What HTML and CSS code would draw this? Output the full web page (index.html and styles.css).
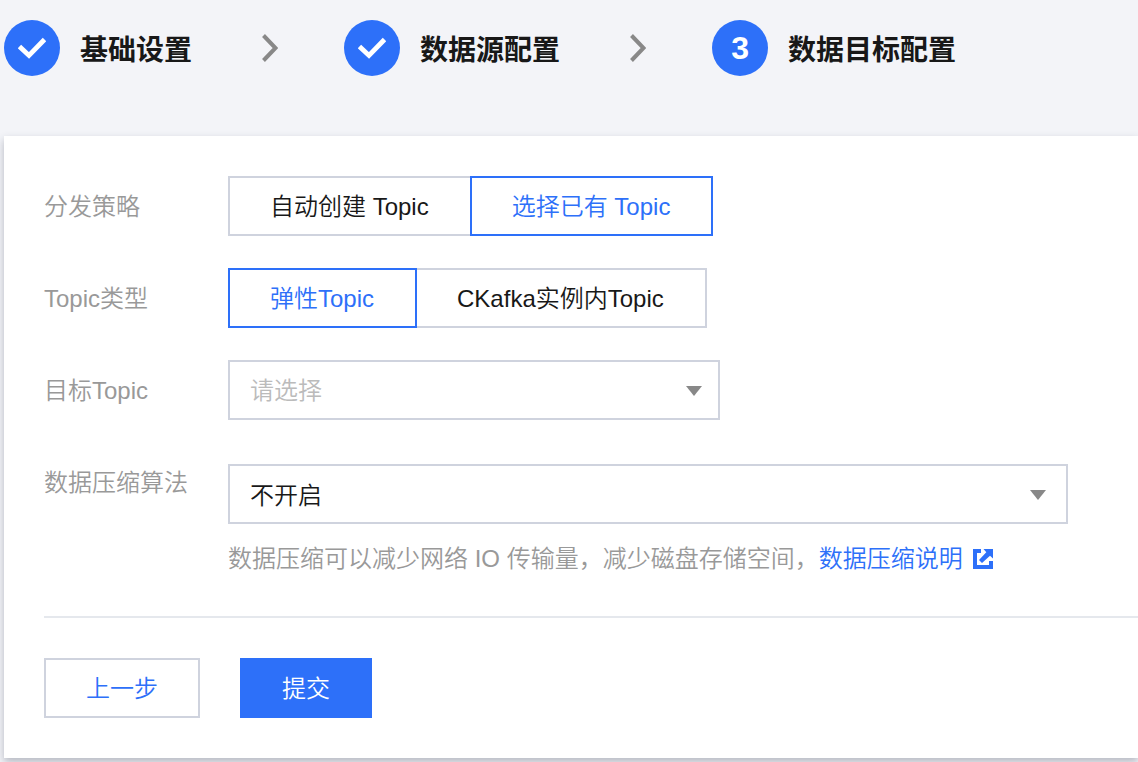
FILE: index.html
```html
<!DOCTYPE html>
<html lang="zh-CN">
<head>
<meta charset="utf-8">
<meta name="viewport" content="width=device-width, initial-scale=1">
<title>数据目标配置</title>
<link rel="stylesheet" href="styles.css">
</head>
<body>
<ol class="steps">
  <li class="step">
    <span class="step-badge"><svg width="28" height="28" viewBox="0 0 28 28" aria-hidden="true"><path d="M1.5 12.5 11 21.5 26.5 5.5" fill="none" stroke="#fff" stroke-width="4.8"/></svg></span>
    <span class="step-title">基础设置</span>
    <svg class="step-arrow" width="16" height="28" viewBox="0 0 16 28" aria-hidden="true"><path d="M1.5 1.5 13.5 14 1.5 26.5" fill="none" stroke="#888" stroke-width="4"/></svg>
  </li>
  <li class="step">
    <span class="step-badge"><svg width="28" height="28" viewBox="0 0 28 28" aria-hidden="true"><path d="M1.5 12.5 11 21.5 26.5 5.5" fill="none" stroke="#fff" stroke-width="4.8"/></svg></span>
    <span class="step-title">数据源配置</span>
    <svg class="step-arrow" width="16" height="28" viewBox="0 0 16 28" aria-hidden="true"><path d="M1.5 1.5 13.5 14 1.5 26.5" fill="none" stroke="#888" stroke-width="4"/></svg>
  </li>
  <li class="step" aria-current="step">
    <span class="step-badge">3</span>
    <span class="step-title">数据目标配置</span>
  </li>
</ol>
<form class="card">
  <div class="row">
    <span class="label" id="policy-label">分发策略</span>
    <div class="segment" role="group" aria-labelledby="policy-label">
      <button class="segment-item" type="button" aria-pressed="false">自动创建 Topic</button>
      <button class="segment-item active" type="button" aria-pressed="true">选择已有 Topic</button>
    </div>
  </div>
  <div class="row">
    <span class="label" id="type-label">Topic类型</span>
    <div class="segment" role="group" aria-labelledby="type-label">
      <button class="segment-item active" type="button" aria-pressed="true">弹性Topic</button>
      <button class="segment-item" type="button" aria-pressed="false">CKafka实例内Topic</button>
    </div>
  </div>
  <div class="row">
    <label class="label" for="target">目标Topic</label>
    <div class="control">
      <div class="select-box select-medium">
        <select class="select placeholder" id="target"><option>请选择</option></select>
        <svg class="caret" width="16" height="10" viewBox="0 0 16 10" aria-hidden="true"><path d="M0 0H16L8 10Z" fill="#888"/></svg>
      </div>
    </div>
  </div>
  <div class="row">
    <label class="label" for="compression">数据压缩算法</label>
    <div class="control control-lowered">
      <div class="select-box select-wide">
        <select class="select" id="compression"><option>不开启</option></select>
        <svg class="caret" width="16" height="10" viewBox="0 0 16 10" aria-hidden="true"><path d="M0 0H16L8 10Z" fill="#888"/></svg>
      </div>
      <p class="hint">数据压缩可以减少网络 IO 传输量，减少磁盘存储空间，<a class="link" href="#">数据压缩说明<svg class="link-icon" width="20" height="20" viewBox="0 0 20 20" aria-hidden="true"><path d="M0 0H8V4H4V16H16V12H20V20H0Z" fill="currentColor"/><path d="M10.5 0H20V9.5L17 6.8 9 14 6 11 13.3 3.2Z" fill="currentColor"/></svg></a></p>
    </div>
  </div>
  <div class="actions">
    <button class="button" type="button">上一步</button>
    <button class="button primary" type="submit">提交</button>
  </div>
</form>
</body>
</html>
```
FILE: styles.css
```css
* {
  box-sizing: border-box;
}

body {
  margin: 0;
  background: #f3f4f8;
  color: #181818;
  font-family: "Liberation Sans", "Noto Sans CJK SC", sans-serif;
  font-size: 24px;
  font-weight: 350;
  line-height: 36px;
}

.steps {
  display: flex;
  margin: 0;
  padding: 20px 4px 60px;
  list-style: none;
}

.step {
  display: flex;
  flex: none;
  align-items: center;
}

.step-badge {
  display: flex;
  align-items: center;
  justify-content: center;
  width: 56px;
  height: 56px;
  margin-right: 20px;
  border-radius: 50%;
  background: #2d70f9;
  color: #fff;
  font-size: 32px;
  font-weight: 700;
}

.step-title {
  padding-top: 6px;
  font-size: 28px;
  font-weight: 700;
}

.step-arrow {
  margin: 0 66px 0 70px;
}

.card {
  margin: 0 0 4px 4px;
  padding: 40px 0 40px 40px;
  background: #fff;
  box-shadow: 0 4px 8px rgba(54, 58, 80, 0.32);
}

.row {
  display: flex;
  align-items: flex-start;
  margin-bottom: 32px;
}

.label {
  flex: none;
  width: 184px;
  padding: 13px 0 11px;
  color: #999;
}

.segment {
  display: flex;
}

.segment-item,
.button {
  height: 60px;
  padding: 2px 40px 0;
  border: 2px solid #cfd3de;
  border-radius: 0;
  background: #fff;
  color: #181818;
  font: inherit;
  white-space: nowrap;
}

.segment-item {
  padding-right: 41px;
}

.segment-item + .segment-item {
  margin-left: -2px;
}

.segment-item.active {
  z-index: 1;
  border-color: #2d70f9;
  color: #2d70f9;
}

.control {
  flex: 1;
}

.control-lowered {
  padding-top: 12px;
}

.select-box {
  position: relative;
  max-width: 100%;
}

.select-medium {
  width: 492px;
}

.select-wide {
  width: 840px;
}

.select {
  display: block;
  width: 100%;
  height: 60px;
  padding: 4px 60px 0 20px;
  border: 2px solid #cfd3de;
  border-radius: 0;
  appearance: none;
  background: #fff;
  color: #181818;
  font: inherit;
}

.select.placeholder {
  padding-top: 2px;
  color: #bbb;
}

.caret {
  position: absolute;
  top: 26px;
  right: 18px;
  pointer-events: none;
}

.select-wide .caret {
  right: 22px;
}

.hint {
  margin: 17px 0 0;
  color: #999;
}

.link {
  color: #2d70f9;
  text-decoration: none;
}

.link-icon {
  margin-left: 10px;
  vertical-align: -2px;
}

.actions {
  display: flex;
  gap: 40px;
  margin-top: 39px;
  padding-top: 40px;
  border-top: 2px solid #e5e8ed;
}

.button {
  color: #2d70f9;
}

.button.primary {
  border-color: #2d70f9;
  background: #2d70f9;
  color: #fff;
}
```
